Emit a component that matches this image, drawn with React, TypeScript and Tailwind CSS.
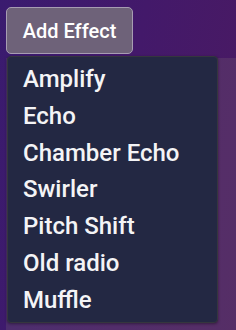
import React from "react";

const items = ["Amplify", "Echo", "Chamber Echo", "Swirler", "Pitch Shift", "Old radio", "Muffle"];

export default function App() {
  return (
    <div
      className="relative w-[236px] h-[330px] overflow-hidden bg-[linear-gradient(100deg,#3a1b6f_0%,#43196a_50%,#4a1a62_100%)]"
      style={{ fontFamily: "Roboto, 'Noto Sans', sans-serif" }}
    >
      <div className="flex flex-col h-full pl-[6px] pt-[7px]">
        <button className="w-[127px] h-[47px] rounded-[5px] border border-[#a79db2] bg-[#6e6279] text-white text-[20px] font-medium leading-none flex items-center justify-center shrink-0">
          Add Effect
        </button>
        <div className="mt-[4px] flex-1 bg-[#7a6a74]/25" />
      </div>
      <div className="absolute left-[7px] top-[56px] w-[211px] rounded-[4px] border border-[#35363e] bg-[#232843] pt-[4px] pb-[3px] shadow-[0_1px_3px_rgba(0,0,0,0.4)]">
        {items.map((t) => (
          <div key={t} className="h-[36.8px] leading-[36.8px] pl-[15px] text-[24px] font-medium text-[#f4f4f6]">
            {t}
          </div>
        ))}
      </div>
    </div>
  );
}
